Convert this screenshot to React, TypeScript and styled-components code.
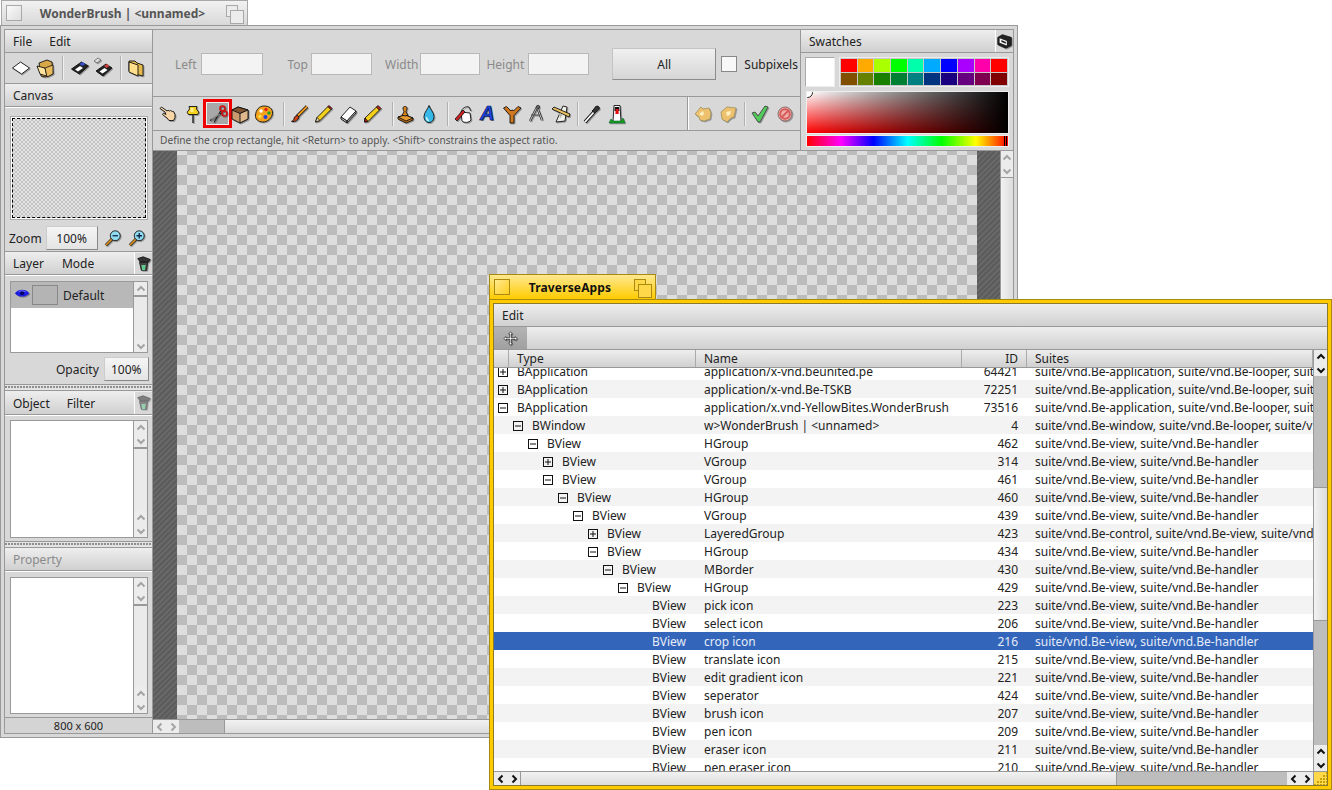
import React from "react";
import styled, { createGlobalStyle } from "styled-components";

const Global = createGlobalStyle`
  html, body { margin: 0; padding: 0; background: #fff; overflow: hidden; }
  body { font: 12px "Noto Sans", "DejaVu Sans", sans-serif; color: #222; }
  * { box-sizing: border-box; }
`;

const barGradient = "linear-gradient(#eeeeee, #d0d0d0)";

/* ---------- windows ---------- */
const Desk = styled.div`
  position: relative;
  width: 1332px;
  height: 790px;
  overflow: hidden;
`;
const Win = styled.section<{ $x: number; $y: number; $w: number; $h: number }>`
  position: absolute;
  left: ${(p) => p.$x}px;
  top: ${(p) => p.$y}px;
  width: ${(p) => p.$w}px;
  height: ${(p) => p.$h}px;
  display: flex;
  flex-direction: column;
`;
const Tab = styled.header<{ $active?: boolean; $w: number; $h: number; $ml: number }>`
  width: ${(p) => p.$w}px;
  height: ${(p) => p.$h}px;
  margin-left: ${(p) => p.$ml}px;
  flex: none;
  display: flex;
  align-items: center;
  padding: 0 4px;
  border: 1px solid ${(p) => (p.$active ? "#a88a10" : "#a8a8a8")};
  border-bottom: none;
  background: ${(p) => (p.$active ? "linear-gradient(#ffe890, #ffcb00)" : "linear-gradient(#f2f2f2, #d8d8d8)")};
`;
const TabBox = styled.span<{ $active?: boolean }>`
  width: 16px;
  height: 16px;
  flex: none;
  border: 1px solid ${(p) => (p.$active ? "#a88a10" : "#a8a8a8")};
  background: ${(p) => (p.$active ? "linear-gradient(135deg, #ffe890, #ffd020)" : "linear-gradient(135deg, #fafafa, #dedede)")};
`;
const TabZoom = styled.span<{ $active?: boolean }>`
  position: relative;
  width: 17px;
  height: 17px;
  flex: none;
  &::before, &::after {
    content: "";
    position: absolute;
    border: 1px solid ${(p) => (p.$active ? "#a88a10" : "#a8a8a8")};
    background: ${(p) => (p.$active ? "#ffd84a" : "#ececec")};
  }
  &::before { left: 0; top: 0; width: 10px; height: 10px; }
  &::after { left: 4px; top: 5px; width: 12px; height: 12px; }
`;
const TabTitle = styled.h1<{ $active?: boolean }>`
  flex: 1;
  margin: 0 ${(p) => (p.$active ? 4 : 3)}px 0 0;
  text-align: center;
  font: bold 12px "Noto Sans", sans-serif;
  letter-spacing: ${(p) => (p.$active ? 0.15 : 0)}px;
  color: ${(p) => (p.$active ? "#111" : "#555")};
`;
const Frame = styled.div<{ $active?: boolean }>`
  flex: 1;
  min-height: 0;
  padding: 3px;
  border: 1px solid ${(p) => (p.$active ? "#a88a10" : "#999")};
  background: ${(p) => (p.$active ? "#ffcb00" : "#d8d8d8")};
  display: flex;
`;
const Inner = styled.div<{ $active?: boolean; $column?: boolean }>`
  flex: 1;
  min-width: 0;
  border: 1px solid ${(p) => (p.$active ? "#8a7a30" : "#999")};
  background: #d8d8d8;
  display: flex;
  flex-direction: ${(p) => (p.$column ? "column" : "row")};
  overflow: hidden;
`;

/* ---------- bars ---------- */
const Bar = styled.div<{ $h: number; $muted?: boolean; $low?: boolean }>`
  height: ${(p) => p.$h}px;
  flex: none;
  display: flex;
  align-items: center;
  padding-top: ${(p) => (p.$low ? 1 : 0)}px;
  background: ${barGradient};
  border-bottom: 1px solid #999;
  color: ${(p) => (p.$muted ? "#8a8a8a" : "#222")};
  white-space: nowrap;
`;
const BarItem = styled.span<{ $ml: number }>`
  margin-left: ${(p) => p.$ml}px;
`;
const BarButton = styled.span`
  margin-left: auto;
  width: 18px;
  align-self: stretch;
  display: flex;
  align-items: center;
  justify-content: center;
  border-left: 1px solid #fff;
  background: #d8d8d8;
`;

const LeftCol = styled.aside`
  width: 148px;
  flex: none;
  display: flex;
  flex-direction: column;
  border-right: 1px solid #999;
`;
const RightCol = styled.main`
  flex: 1;
  min-width: 0;
  display: flex;
  flex-direction: column;
`;
const ToolRow = styled.div`
  height: 31px;
  flex: none;
  display: flex;
  align-items: center;
  padding-left: 4px;
  background: #d8d8d8;
  border-bottom: 1px solid #999;
`;
const Cell = styled.span<{ $w?: number; $ml?: number }>`
  width: ${(p) => p.$w ?? 24}px;
  height: 24px;
  margin-left: ${(p) => p.$ml ?? 0}px;
  flex: none;
  display: flex;
  align-items: center;
  justify-content: center;
`;
const Sep = styled.span<{ $ml: number; $mr: number }>`
  width: 1px;
  height: 24px;
  flex: none;
  margin: 0 ${(p) => p.$mr}px 0 ${(p) => p.$ml}px;
  background: #b0b0b0;
  box-shadow: 1px 0 0 #f0f0f0;
`;
const Panel = styled.div<{ $h: number; $pt: number; $pb: number }>`
  height: ${(p) => p.$h}px;
  flex: none;
  display: flex;
  flex-direction: column;
  padding: ${(p) => p.$pt}px 4px ${(p) => p.$pb}px 5px;
  border-bottom: 1px solid #999;
  border-top: 1px solid #fff;
`;
const Preview = styled.div`
  height: 104px;
  margin-bottom: 4px;
  flex: none;
  border: 1px solid #aaa;
  padding: 1px;
  background: #fff;
  display: flex;
`;
const PreviewInner = styled.div`
  flex: 1;
  border: 1px dashed #000;
  background: repeating-conic-gradient(#c4c4c4 0 25%, #e2e2e2 0 50%) 0 0 / 4px 4px;
`;
const Row = styled.div<{ $h: number }>`
  height: ${(p) => p.$h}px;
  flex: none;
  display: flex;
  align-items: center;
`;
const ValueBox = styled.span<{ $w: number; $ml: number }>`
  width: ${(p) => p.$w}px;
  height: 24px;
  margin-left: ${(p) => p.$ml}px;
  flex: none;
  display: flex;
  align-items: center;
  justify-content: center;
  border: 1px solid #888;
  border-top-color: #ccc;
  border-left-color: #ccc;
  background: linear-gradient(#f5f5f5, #e4e4e4);
`;
const RowLabel = styled.span<{ $ml?: number }>`
  margin-left: ${(p) => p.$ml ?? 0}px;
`;
const ListBox = styled.div<{ $h?: number }>`
  ${(p) => (p.$h ? `height: ${p.$h}px; flex: none;` : "flex: 1;")}
  display: flex;
  min-height: 0;
  border: 1px solid #999;
  background: #fff;
`;
const ListBody = styled.div`
  flex: 1;
  min-width: 0;
`;
const LayerRow = styled.div`
  height: 26px;
  display: flex;
  align-items: center;
  background: #b8b8b8;
  padding-left: 3px;
`;
const LayerThumb = styled.span`
  width: 26px;
  height: 20px;
  margin: 0 5px 0 0;
  border: 1px solid #888;
  background: #b4b4b4;
`;
const Splitter = styled.div`
  height: 6px;
  flex: none;
  border-bottom: 1px solid #999;
  background: radial-gradient(circle at 1px 2px, #888 0.7px, transparent 0.8px) 0 0 / 3px 5px #e4e4e4;
`;
const StatusCount = styled.div`
  flex: 1;
  display: flex;
  align-items: center;
  justify-content: center;
  font-size: 11px;
  background: #d4d4d4;
`;

/* ---------- scrollbars ---------- */
const VScroll = styled.div<{ $dark?: boolean; $w?: number }>`
  width: ${(p) => p.$w ?? 14}px;
  flex: none;
  display: flex;
  flex-direction: column;
  border-left: 1px solid #999;
  background: ${(p) => (p.$dark ? "#bdbdbd" : "#eaeaea")};
`;
const HScroll = styled.div`
  height: 14px;
  flex: none;
  display: flex;
  border-top: 1px solid #999;
  background: #bdbdbd;
`;
const Arrow = styled.span<{ $h?: number; $w?: number }>`
  width: ${(p) => (p.$w ? `${p.$w}px` : "auto")};
  height: ${(p) => (p.$h ? `${p.$h}px` : "auto")};
  flex: none;
  display: flex;
  align-items: center;
  justify-content: center;
  background: #ececec;
`;
const VThumb = styled.span<{ $size: number; $before?: number }>`
  height: ${(p) => p.$size}px;
  margin-top: ${(p) => p.$before ?? 0}px;
  flex: none;
  border-top: 1px solid #999;
  border-bottom: 1px solid #999;
  background: linear-gradient(90deg, #f2f2f2, #dcdcdc);
`;
const Track = styled.span`
  flex: 1;
`;
const HThumb = styled.span<{ $ml: number; $w?: number }>`
  margin-left: ${(p) => p.$ml}px;
  ${(p) => (p.$w ? `width: ${p.$w}px; flex: none;` : "flex: 1;")}
  border-left: 1px solid #999;
  border-right: 1px solid #999;
  background: linear-gradient(#f2f2f2, #dcdcdc);
`;
const Chev = ({ d, dark }: { d: "u" | "d" | "l" | "r"; dark?: boolean }) => {
  const paths = { u: "M1.5 6.5L5 3l3.5 3.5", d: "M1.5 3.5L5 7l3.5-3.5", l: "M6.5 1.5L3 5l3.5 3.5", r: "M3.5 1.5L7 5 3.5 8.5" };
  return (
    <svg width="10" height="10" viewBox="0 0 10 10">
      <path d={paths[d]} fill="none" stroke={dark ? "#111" : "#a4a4a4"} strokeWidth="2" />
    </svg>
  );
};
const SideBar = ({ double }: { double?: boolean }) => (
  <VScroll>
    <Arrow $h={13}><Chev d="u" /></Arrow>
    {double && <Arrow $h={13}><Chev d="d" /></Arrow>}
    <VThumb $size={0} />
    <Track />
    {double && <Arrow $h={13}><Chev d="u" /></Arrow>}
    <Arrow $h={13}><Chev d="d" /></Arrow>
  </VScroll>
);

/* ---------- top panel ---------- */
const TopArea = styled.div`
  height: 121px;
  flex: none;
  display: flex;
  border-bottom: 1px solid #999;
`;
const TopMain = styled.div`
  flex: 1;
  min-width: 0;
  display: flex;
  flex-direction: column;
  border-right: 1px solid #999;
`;
const FieldRow = styled.div`
  height: 67px;
  flex: none;
  display: flex;
  align-items: center;
  padding: 2px 0 0 22px;
  border-bottom: 1px solid #999;
`;
const Field = styled.label<{ $ml?: number }>`
  display: flex;
  align-items: center;
  margin-left: ${(p) => p.$ml ?? 0}px;
  color: #8a8a8a;
`;
const FieldInput = styled.span<{ $w: number; $ml: number }>`
  width: ${(p) => p.$w}px;
  height: 22px;
  margin-left: ${(p) => p.$ml}px;
  border: 1px solid #b8b8b8;
  background: #f3f3f3;
`;
const AllButton = styled.span`
  width: 104px;
  height: 32px;
  margin-left: 23px;
  display: flex;
  align-items: center;
  justify-content: center;
  border: 1px solid #8c8c8c;
  border-top-color: #c4c4c4;
  border-left-color: #c4c4c4;
  background: linear-gradient(#f0f0f0, #d6d6d6);
`;
const CheckBox = styled.span`
  width: 16px;
  height: 16px;
  margin-left: 5px;
  flex: none;
  border: 1px solid #888;
  background: #f8f8f8;
`;
const CheckLabel = styled.span`
  margin-left: 7px;
`;
const IconRow = styled.div`
  height: 34px;
  flex: none;
  display: flex;
  align-items: center;
  padding-left: 3px;
  border-bottom: 1px solid #999;
`;
const ToolCell = styled.span`
  width: 24.5px;
  height: 26px;
  flex: none;
  display: flex;
  align-items: center;
  justify-content: center;
`;
const ActiveTool = styled.span`
  width: 29px;
  height: 29px;
  flex: none;
  margin: 0 -4.5px 0 -2px;
  display: flex;
  align-items: center;
  justify-content: center;
  border: 3px solid #f00000;
  outline: 1px solid #eee;
  outline-offset: -4px;
  background: #a8a8a8;
`;
const GroupDivider = styled.span<{ $ml: number; $mr: number }>`
  width: 2px;
  align-self: stretch;
  flex: none;
  margin: 0 ${(p) => p.$mr}px 0 ${(p) => p.$ml}px;
  background: linear-gradient(90deg, #999 50%, #fff 50%);
`;
const Hint = styled.div`
  flex: 1;
  display: flex;
  align-items: center;
  padding: 0 0 2px 7px;
  font-size: 10.2px;
  color: #555;
  white-space: nowrap;
`;
const SwatchCol = styled.div`
  width: 212px;
  flex: none;
  display: flex;
  flex-direction: column;
`;
const SwatchBody = styled.div`
  flex: 1;
  display: flex;
  flex-direction: column;
  padding: 4px 4px 0 4px;
  gap: 4px;
`;
const SwatchTop = styled.div`
  display: flex;
  gap: 4px;
  height: 30px;
`;
const Current = styled.span`
  width: 30px;
  flex: none;
  border: 1px solid #aaa;
  border-right-color: #eee;
  border-bottom-color: #eee;
  background: #fff;
`;
const SwatchGrid = styled.div`
  flex: 1;
  display: grid;
  grid-template-columns: repeat(10, 1fr);
  grid-template-rows: 1fr 1fr;
  gap: 1px;
  padding: 1px;
  background: #c8c8c8;
  border: 1px solid #eee;
`;
const Swatch = styled.span<{ $c: string }>`
  background: ${(p) => p.$c};
`;
const GradientBox = styled.div`
  height: 43px;
  flex: none;
  margin-left: 1px;
  border: 1px solid #eee;
  position: relative;
  overflow: hidden;
  background: linear-gradient(to right, transparent, #000), linear-gradient(to bottom, #fff, #f00);
`;
const GradientKnob = styled.span`
  position: absolute;
  left: -5px;
  top: -5px;
  width: 11px;
  height: 11px;
  border-radius: 50%;
  border: 1px solid #222;
  background: #fff;
`;
const HueStrip = styled.div`
  height: 12px;
  flex: none;
  margin: -3px 0 0 1px;
  position: relative;
  border: 1px solid #eee;
  background: linear-gradient(to right, #f00 0%, #f0f 17%, #00f 33%, #0ff 50%, #0f0 67%, #ff0 84%, #f00 100%);
`;
const HueMarker = styled.span`
  position: absolute;
  right: 1px;
  top: 0;
  bottom: 0;
  width: 3px;
  background: #f00;
  border-left: 1px solid #000;
  border-right: 1px solid #000;
`;

/* ---------- canvas ---------- */
const Workspace = styled.div`
  flex: 1;
  min-height: 0;
  display: flex;
`;
const Stripes = styled.div`
  width: 24px;
  flex: none;
  background: repeating-linear-gradient(-45deg, #5c5c5c 0 2px, #686868 2px 4px);
`;
const Checker = styled.div`
  width: 800px;
  flex: none;
  background: repeating-conic-gradient(#dedede 0 25%, #bcbcbc 0 50%) 0 4px / 20px 20px;
`;
const RightStripes = styled(Stripes)`
  width: 23px;
`;

/* ---------- traverse list ---------- */
const ListArea = styled.div`
  flex: 1;
  min-height: 0;
  display: flex;
`;
const TreeColumn = styled.div`
  flex: 1;
  min-width: 0;
  display: flex;
  flex-direction: column;
`;
const HeaderRow = styled.div`
  height: 18px;
  flex: none;
  display: grid;
  grid-template-columns: 15px 187px 266px 65px 1fr;
  background: ${barGradient};
  border-bottom: 1px solid #999;
  position: relative;
  z-index: 1;
`;
const HeaderCell = styled.span<{ $right?: boolean }>`
  padding: 0 ${(p) => (p.$right ? "8px" : "0")} 0 ${(p) => (p.$right ? "0" : "8px")};
  text-align: ${(p) => (p.$right ? "right" : "left")};
  border-right: 1px solid #aaa;
  line-height: 18px;
  overflow: hidden;
`;
const Rows = styled.div`
  flex: 1;
  min-height: 0;
  overflow: hidden;
  background: #fff;
`;
const RowsInner = styled.div`
  margin-top: -6px;
`;
const TreeRow = styled.div<{ $sel?: boolean; $alt?: boolean }>`
  height: 18px;
  display: grid;
  grid-template-columns: 201px 266px 65px 1fr;
  align-items: center;
  white-space: nowrap;
  background: ${(p) => (p.$sel ? "#3366bb" : p.$alt ? "#f3f3f3" : "#fff")};
  color: ${(p) => (p.$sel ? "#e6ecf8" : "#222")};
`;
const TypeCell = styled.span<{ $depth: number }>`
  position: relative;
  padding-left: ${(p) => 23 + p.$depth * 15}px;
`;
const Expander = styled.svg<{ $depth: number }>`
  position: absolute;
  left: ${(p) => 4 + p.$depth * 15}px;
  top: 4px;
  width: 10px;
  height: 10px;
`;
const NameCell = styled.span`
  padding-left: 9px;
`;
const IdCell = styled.span`
  padding-right: 8px;
  text-align: right;
`;
const SuiteCell = styled.span`
  padding-left: 9px;
  overflow: hidden;
`;
const MoveButton = styled.span`
  width: 33px;
  align-self: stretch;
  display: flex;
  align-items: center;
  justify-content: center;
  background: linear-gradient(#b4b4b4, #a0a0a0);
`;
const Corner = styled.span`
  width: 14px;
  flex: none;
  border-left: 1px solid #999;
  background:
    linear-gradient(135deg, #ffd84a 50%, transparent 50%),
    radial-gradient(circle at 1px 1px, #c8a200 0.8px, transparent 1px) 0 0 / 3px 3px #ffda55;
`;

/* ---------- icons ---------- */
const Svg = styled.svg<{ $dim?: boolean; $s?: number }>`
  width: ${(p) => p.$s ?? 20}px;
  height: ${(p) => p.$s ?? 20}px;
  flex: none;
  overflow: visible;
  opacity: ${(p) => (p.$dim ? 0.55 : 1)};
  filter: drop-shadow(1px 1px 0 rgba(0, 0, 0, 0.3));
`;
const k = { stroke: "#111", strokeWidth: 0.9, strokeLinejoin: "round" as const };
const icons: Record<string, React.ReactNode> = {
  hand: <path {...k} fill="#f8d6a6" d="M2 4.5l1.500-1.500 5.500 4 1-.8 1.500.8 1.200-.5 1.500 1 1.300 0 1.500 3v3l-1.500 3H11l-2-2.500-4.500-3.500 1-1.400 2.500 1.400-1-2.500z" />,
  pin: <><path d="M10 10v9" stroke="#333" strokeWidth="1.600" /><path {...k} fill="#f6d21f" d="M6 2.500h8l-.6 2.400 2.400 3.300-1.200 2.300H5.400L4.200 8.200l2.400-3.300z" /><path d="M7.500 4h3v4h-3z" fill="#fff08a" /></>,
  crop: <><path d="M2 16.500L14.500 8.500M6 18.500L13 6.500" stroke="#222" strokeWidth="1.300" /><path d="M3.500 15.500L12 10" stroke="#eee" strokeWidth=".6" /><circle cx="14.500" cy="4.500" r="2.500" fill="none" stroke="#d01010" strokeWidth="1.600" /><circle cx="16.500" cy="9.500" r="2.500" fill="none" stroke="#d01010" strokeWidth="1.600" /></>,
  box: <><path {...k} fill="#c99a6e" d="M2 6l6-3 10 3v9l-8 4-8-4z" /><path {...k} fill="#7d5430" d="M2 6l8 3.500L18 6 8 3z" /><path {...k} fill="#e0b68c" d="M10 9.500V19l8-4V6z" /></>,
  palette: <><path {...k} fill="#f2a21c" d="M10 2c5 0 9 2.500 8.500 7.500-.4 4-4.500 8.500-9.500 8.500S1 15 1.500 11C2 6 5 2 10 2z" /><circle cx="7" cy="7" r="1.700" fill="#fff" /><circle cx="12" cy="5.500" r="1.700" fill="#e02020" /><circle cx="15" cy="9" r="1.700" fill="#20a020" /><circle cx="11.500" cy="13" r="2" fill="#2040e0" /><circle cx="6" cy="12.500" r="1.700" fill="#f8e040" /></>,
  brush: <><path d="M18 2.500L8.500 12" stroke="#111" strokeWidth="3.400" /><path d="M18 2.500L8.500 12" stroke="#f09a20" strokeWidth="1.800" /><path {...k} fill="#c83c10" d="M8 11l2 2c-.5 3-3.500 5-7.500 4.500 2-1 2.500-2.500 3-4.500z" /></>,
  pen: <><path {...k} fill="#f4d018" d="M15 2.500l3 3L7 16.500l-4.500 1.500L4 13.500z" /><path {...k} fill="#d82020" d="M15 2.500l1-1 3 3-1 1z" /><path d="M2.500 18L4 13.500l3 3z" fill="#f4dcb0" stroke="#111" strokeWidth=".8" /></>,
  eraser: <><path {...k} fill="#fff" d="M12 3l6 4-9 10-6-4z" /><path {...k} fill="#ccc" d="M3 13l6 4v2l-6-4zM9 17l9-10v2L9 19z" /></>,
  peneraser: <><path {...k} fill="#f4d018" d="M14.500 3l3 3L6 17.500 2.500 18 3 14z" /><path {...k} fill="#d82020" d="M14.500 3l1.500-1.500 3 3L17.500 6zM3 14l3 3.500-3.500.5z" /></>,
  stamp: <><path {...k} fill="#c87414" d="M3 13l7-2 8 3v2l-7 3-8-4z" /><path {...k} fill="#e89a30" d="M3 13l7-2 8 3-7 3z" /><path {...k} fill="#d8841c" d="M8 4c0-2 4-2 4 0s-1 3-1 4l2 3-3 1-3-1 2-3c0-1-1-2-1-4z" /></>,
  drop: <><path {...k} fill="#38b8e8" d="M10 1.500c1 3.500 5 7 5 11s-2.500 6-5 6-5-2-5-6 4-7.500 5-11z" /><path d="M7.500 13c0 2 1 3.500 2.500 3.500" stroke="#c8f2ff" strokeWidth="1.500" fill="none" /></>,
  bucket: <><path {...k} fill="#fff" d="M8 8l9 1 1 7c-2 3-7 3-9 1z" /><path {...k} fill="none" d="M8 8c1-4 5-6 8-5l2 4" /><path d="M2 15L10 6l2 2-8 9z" fill="#d02020" stroke="#111" strokeWidth=".8" /></>,
  branch: <path {...k} fill="#d07820" d="M1.500 4l3-1.500L9 7l.5-.8 1.500 0 .5.800 4.500-4.500 3 1.500L12 11.500V19H8v-7.500z" />,
  compass: <><path d="M11 3L4 17M11 3l5 13" stroke="#222" strokeWidth="2.200" fill="none" /><path d="M11 3L4 17M11 3l5 13" stroke="#ddd" strokeWidth=".9" fill="none" /><path d="M5 11h9" stroke="#555" strokeWidth="1.200" /><circle cx="12" cy="3" r="1.700" fill="#666" stroke="#111" strokeWidth=".6" /></>,
  ruler: <><path {...k} fill="#f0f0e8" d="M12 2l4 1-2 14-9 1z" /><path {...k} fill="#e8c060" d="M1 5l2-2 16 7-1 3z" /><path d="M8 9l4 1.500-3 4z" fill="#b9b9b0" /></>,
  dropper: <><path d="M3 18L12 8" stroke="#111" strokeWidth="3.400" /><path d="M3 18L12 8" stroke="#fff" strokeWidth="1.800" /><path {...k} fill="#333" d="M10 7l2-2c1-2.500 3-3.500 4.500-2.500s1 3.500-1.500 4.500l-2 2z" /></>,
  post: <><path d="M7 1.500h6l1 16H6z" fill="#fff" stroke="#111" strokeWidth=".9" /><path d="M7.800 3h4.200l.4 4H7.500z" fill="#111" /><path d="M8.500 5h3l.2 5H8.400z" fill="#e01010" /><path d="M2 19l2-4 2 2 8 0 2-3 2 5z" fill="#18a018" stroke="#063" strokeWidth=".6" /></>,
  prev: <><path fill="#edc16e" stroke="#a0905c" strokeWidth=".8" d="M2 10l6-7 2 2 6-1 2 5-1 6-6 2-4-1-1-3z" /><path d="M6 10l4-3 1 3-2 2z" fill="#fff0c0" /></>,
  next: <><path fill="#edc16e" stroke="#a0905c" strokeWidth=".8" d="M18 4l-9-1-6 5 1 7 5 3 4-4 3-1z" /><path d="M8 8l5-1-1 4-3 1z" fill="#fff0c0" /></>,
  check: <path fill="#52cc5a" stroke="#444" strokeWidth=".9" strokeLinejoin="round" d="M2 9l3-1 3 4 7-10 3 1-8 15H8z" />,
  no: <><circle cx="10" cy="10" r="7" fill="#eeb0a8" stroke="#8a6a6a" strokeWidth="1" /><circle cx="10" cy="10" r="4.800" fill="none" stroke="#d65c5c" strokeWidth="2" /><path d="M6 14l8-8" stroke="#d65c5c" strokeWidth="2" /></>,
  newdoc: <path {...k} fill="#fff" d="M1.500 10l8-6 9 6-8 6z" />,
  open: <><path {...k} fill="#d8a848" d="M4 5l8-3 5 2 1 12-8 3-4-1z" /><path {...k} fill="#ffe6a0" d="M2 8l8 2 2 8-7-2z" /><path d="M10 10l8-3v9l-6 3z" fill="#e8bc5c" stroke="#111" strokeWidth=".8" /></>,
  disk: <><path {...k} fill="#222" d="M1.500 11l10-7 7 4-9 8z" /><path d="M5 11.500l5-3.500 3 2-5 3.500z" fill="#fff" /><path d="M9.500 6l3-2 3 2-3 2z" fill="#3a50d0" /></>,
  diskplus: <><path fill="#ddd" stroke="#555" strokeWidth=".7" d="M1 3l4-3 3 2-4 3z" /><path {...k} fill="#222" d="M3 13l10-7 6 4-9 8z" /><path d="M6.500 13.500l5-3.500 3 2-5 3.500z" fill="#fff" /><path d="M11 8l3-2 2.500 2-3 2z" fill="#d04040" /></>,
  folder: <><path {...k} fill="#e4b94e" d="M3 3h6l2 2 6 2v11l-8-2-6-3z" /><path {...k} fill="#ffe08a" d="M3 4l9 3v11l-9-4z" /></>,
  zoomout: <><path d="M2 18L9 11" stroke="#111" strokeWidth="3.200" /><path d="M2 18L9 11" stroke="#ee9a20" strokeWidth="1.700" /><circle cx="12.500" cy="7.500" r="5.500" fill="#8fdcf0" stroke="#111" strokeWidth="1" /><path d="M9.500 7.500h6" stroke="#124" strokeWidth="1.400" /></>,
  zoomin: <><path d="M2 18L9 11" stroke="#111" strokeWidth="3.200" /><path d="M2 18L9 11" stroke="#ee9a20" strokeWidth="1.700" /><circle cx="12.500" cy="7.500" r="5.500" fill="#8fdcf0" stroke="#111" strokeWidth="1" /><path d="M9.500 7.500h6M12.500 4.500v6" stroke="#124" strokeWidth="1.400" /></>,
  trash: <><path {...k} fill="#333" d="M3 4l6-2 8 3-2 3-9 0z" /><path {...k} fill="#444" d="M5 8l9 0-1 9H7z" /><path d="M7 11h5l-1 6H8z" fill="#5ec88c" /></>,
  stack: <><path {...k} fill="#222" d="M2 6l5-3 10 3v9l-6 3-9-4z" /><path d="M4 7l8 3v5l-8-3z" fill="#fff" /><path d="M6 9l5 2v2l-5-2z" fill="#222" /></>,
  eye: <><path d="M1 8c4-5 12-5 16 0-4 5-12 5-16 0z" fill="#1a1ae0" /><circle cx="9" cy="8" r="2.200" fill="#000060" /><path d="M5 6.500c2-1.500 6-1.500 8 0" stroke="#9090ff" fill="none" strokeWidth=".8" /></>,
  move: <><path d="M10 1l2.500 3H11v5h5V7.500l3 2.500-3 2.500V11h-5v5h1.500L10 19l-2.500-3H9v-5H4v1.500L1 10l3-2.500V9h5V4H7.500z" fill="#fff" stroke="#111" strokeWidth=".8" /></>,
};
const Icon = ({ n, dim, s }: { n: string; dim?: boolean; s?: number }) => (
  <Svg viewBox="0 0 20 20" $dim={dim} $s={s}>{icons[n]}</Svg>
);
const TextTool = styled.span`
  font: italic bold 20px "Liberation Sans", sans-serif;
  color: #2048e0;
  -webkit-text-stroke: 0.7px #001060;
  text-shadow: 1px 1px 0 rgba(0, 0, 0, 0.5);
`;

/* ---------- data ---------- */
const appSuite = "suite/vnd.Be-application, suite/vnd.Be-looper, suite/vnd.Be-handler";
const viewSuite = "suite/vnd.Be-view, suite/vnd.Be-handler";
type R = { t: string; n: string; id: number; s: string; d: number; e?: "+" | "-" };
const data: R[] = [
  { t: "BApplication", n: "application/x-vnd.beunited.pe", id: 64421, s: appSuite, d: 0, e: "+" },
  { t: "BApplication", n: "application/x-vnd.Be-TSKB", id: 72251, s: appSuite, d: 0, e: "+" },
  { t: "BApplication", n: "application/x.vnd-YellowBites.WonderBrush", id: 73516, s: appSuite, d: 0, e: "-" },
  { t: "BWindow", n: "w>WonderBrush | <unnamed>", id: 4, s: "suite/vnd.Be-window, suite/vnd.Be-looper, suite/vnd.Be-handler", d: 1, e: "-" },
  { t: "BView", n: "HGroup", id: 462, s: viewSuite, d: 2, e: "-" },
  { t: "BView", n: "VGroup", id: 314, s: viewSuite, d: 3, e: "+" },
  { t: "BView", n: "VGroup", id: 461, s: viewSuite, d: 3, e: "-" },
  { t: "BView", n: "HGroup", id: 460, s: viewSuite, d: 4, e: "-" },
  { t: "BView", n: "VGroup", id: 439, s: viewSuite, d: 5, e: "-" },
  { t: "BView", n: "LayeredGroup", id: 423, s: "suite/vnd.Be-control, suite/vnd.Be-view, suite/vnd.Be-handler", d: 6, e: "+" },
  { t: "BView", n: "HGroup", id: 434, s: viewSuite, d: 6, e: "-" },
  { t: "BView", n: "MBorder", id: 430, s: viewSuite, d: 7, e: "-" },
  { t: "BView", n: "HGroup", id: 429, s: viewSuite, d: 8, e: "-" },
  ...([
    ["pick icon", 223], ["select icon", 206], ["crop icon", 216], ["translate icon", 215],
    ["edit gradient icon", 221], ["seperator", 424], ["brush icon", 207], ["pen icon", 209],
    ["eraser icon", 211], ["pen eraser icon", 210],
  ] as [string, number][]).map(([n, id]) => ({ t: "BView", n, id, s: viewSuite, d: 9 })),
];
const swatches = [
  "#ff0000", "#ffaa00", "#aaff00", "#00ff00", "#00ffaa", "#00aaff", "#0000ff", "#aa00ff", "#ff00aa", "#ff0000",
  "#805000", "#668000", "#1a8000", "#008033", "#008080", "#003380", "#1a0080", "#660080", "#800050", "#800000",
];

export default function App() {
  return (
    <Desk>
      <Global />

      <Win $x={0} $y={0} $w={1018} $h={738}>
        <Tab $w={247} $h={25} $ml={1}>
          <TabBox />
          <TabTitle>WonderBrush | &lt;unnamed&gt;</TabTitle>
          <TabZoom />
        </Tab>
        <Frame>
          <Inner>
            <LeftCol>
              <Bar $h={23} $low><BarItem $ml={8}>File</BarItem><BarItem $ml={17}>Edit</BarItem></Bar>
              <ToolRow>
                <Cell><Icon n="newdoc" /></Cell>
                <Cell><Icon n="open" /></Cell>
                <Sep $ml={5} $mr={5} />
                <Cell $w={23}><Icon n="disk" /></Cell>
                <Cell $w={23}><Icon n="diskplus" /></Cell>
                <Sep $ml={6} $mr={3} />
                <Cell><Icon n="folder" /></Cell>
              </ToolRow>
              <Bar $h={23} $low><BarItem $ml={8}>Canvas</BarItem></Bar>
              <Panel $h={145} $pt={8} $pb={0}>
                <Preview><PreviewInner /></Preview>
                <Row $h={28}>
                  <RowLabel $ml={-1}>Zoom</RowLabel>
                  <ValueBox $w={52} $ml={4}>100%</ValueBox>
                  <Cell $ml={3}><Icon n="zoomout" s={18} /></Cell>
                  <Cell><Icon n="zoomin" s={18} /></Cell>
                </Row>
              </Panel>
              <Bar $h={23} $low>
                <BarItem $ml={8}>Layer</BarItem><BarItem $ml={18}>Mode</BarItem>
                <BarButton><Icon n="trash" s={18} /></BarButton>
              </Bar>
              <Panel $h={110} $pt={5} $pb={0}>
                <ListBox $h={72}>
                  <ListBody>
                    <LayerRow>
                      <Icon n="eye" s={18} />
                      <LayerThumb />
                      Default
                    </LayerRow>
                  </ListBody>
                  <SideBar />
                </ListBox>
                <Row $h={32}>
                  <RowLabel $ml={46}>Opacity</RowLabel>
                  <ValueBox $w={45} $ml={5}>100%</ValueBox>
                </Row>
              </Panel>
              <Splitter />
              <Bar $h={24} $low>
                <BarItem $ml={8}>Object</BarItem><BarItem $ml={17}>Filter</BarItem>
                <BarButton><Icon n="trash" s={18} dim /></BarButton>
              </Bar>
              <Panel $h={127} $pt={4} $pb={3}>
                <ListBox><ListBody /><SideBar double /></ListBox>
              </Panel>
              <Splitter />
              <Bar $h={23} $muted $low><BarItem $ml={8}>Property</BarItem></Bar>
              <Panel $h={147} $pt={5} $pb={3}>
                <ListBox><ListBody /><SideBar double /></ListBox>
              </Panel>
              <StatusCount>800 x 600</StatusCount>
            </LeftCol>

            <RightCol>
              <TopArea>
                <TopMain>
                  <FieldRow>
                    <Field>Left<FieldInput $w={62} $ml={4} /></Field>
                    <Field $ml={25}>Top<FieldInput $w={61} $ml={3} /></Field>
                    <Field $ml={13}>Width<FieldInput $w={60} $ml={2} /></Field>
                    <Field $ml={6}>Height<FieldInput $w={61} $ml={4} /></Field>
                    <AllButton>All</AllButton>
                    <CheckBox />
                    <CheckLabel>Subpixels</CheckLabel>
                  </FieldRow>
                  <IconRow>
                    <ToolCell><Icon n="hand" /></ToolCell>
                    <ToolCell><Icon n="pin" /></ToolCell>
                    <ActiveTool><Icon n="crop" /></ActiveTool>
                    <ToolCell><Icon n="box" /></ToolCell>
                    <ToolCell><Icon n="palette" /></ToolCell>
                    <Sep $ml={6} $mr={3} />
                    <ToolCell><Icon n="brush" /></ToolCell>
                    <ToolCell><Icon n="pen" /></ToolCell>
                    <ToolCell><Icon n="eraser" /></ToolCell>
                    <ToolCell><Icon n="peneraser" /></ToolCell>
                    <Sep $ml={7} $mr={0} />
                    <ToolCell><Icon n="stamp" /></ToolCell>
                    <ToolCell><Icon n="drop" /></ToolCell>
                    <Sep $ml={5} $mr={3} />
                    <ToolCell><Icon n="bucket" /></ToolCell>
                    <ToolCell><TextTool>A</TextTool></ToolCell>
                    <ToolCell><Icon n="branch" /></ToolCell>
                    <ToolCell><Icon n="compass" /></ToolCell>
                    <ToolCell><Icon n="ruler" /></ToolCell>
                    <Sep $ml={4} $mr={2} />
                    <ToolCell><Icon n="dropper" /></ToolCell>
                    <ToolCell><Icon n="post" /></ToolCell>
                    <GroupDivider $ml={58} $mr={2} />
                    <ToolCell><Icon n="prev" /></ToolCell>
                    <ToolCell><Icon n="next" /></ToolCell>
                    <Sep $ml={4} $mr={3} />
                    <ToolCell><Icon n="check" /></ToolCell>
                    <ToolCell><Icon n="no" /></ToolCell>
                  </IconRow>
                  <Hint>Define the crop rectangle, hit &lt;Return&gt; to apply. &lt;Shift&gt; constrains the aspect ratio.</Hint>
                </TopMain>
                <SwatchCol>
                  <Bar $h={23}>
                    <BarItem $ml={8}>Swatches</BarItem>
                    <BarButton><Icon n="stack" s={18} /></BarButton>
                  </Bar>
                  <SwatchBody>
                    <SwatchTop>
                      <Current />
                      <SwatchGrid>
                        {swatches.map((c, i) => <Swatch key={i} $c={c} />)}
                      </SwatchGrid>
                    </SwatchTop>
                    <GradientBox><GradientKnob /></GradientBox>
                    <HueStrip><HueMarker /></HueStrip>
                  </SwatchBody>
                </SwatchCol>
              </TopArea>
              <Workspace>
                <Stripes />
                <Checker />
                <RightStripes />
                <VScroll $w={13}>
                  <Arrow $h={13}><Chev d="u" /></Arrow>
                  <Arrow $h={13}><Chev d="d" /></Arrow>
                  <VThumb $size={560} />
                </VScroll>
              </Workspace>
              <HScroll>
                <Arrow $w={13}><Chev d="l" /></Arrow>
                <Arrow $w={13}><Chev d="r" /></Arrow>
                <HThumb $ml={45} />
              </HScroll>
            </RightCol>
          </Inner>
        </Frame>
      </Win>

      <Win $x={489} $y={274} $w={843} $h={516}>
        <Tab $active $w={167} $h={25} $ml={0}>
          <TabBox $active />
          <TabTitle $active>TraverseApps</TabTitle>
          <TabZoom $active />
        </Tab>
        <Frame $active>
          <Inner $active $column>
            <Bar $h={23}><BarItem $ml={8}>Edit</BarItem></Bar>
            <Bar $h={23}><MoveButton><Icon n="move" s={15} /></MoveButton></Bar>
            <ListArea>
              <TreeColumn>
                <HeaderRow>
                  <HeaderCell />
                  <HeaderCell>Type</HeaderCell>
                  <HeaderCell>Name</HeaderCell>
                  <HeaderCell $right>ID</HeaderCell>
                  <HeaderCell>Suites</HeaderCell>
                </HeaderRow>
                <Rows>
                  <RowsInner>
                    {data.map((r, i) => (
                      <TreeRow key={i} $alt={i % 2 === 1} $sel={r.id === 216}>
                        <TypeCell $depth={r.d}>
                          {r.e && (
                            <Expander $depth={r.d} viewBox="0 0 10 10">
                              <rect x=".5" y=".5" width="9" height="9" fill="none" stroke="#111" />
                              <path d={r.e === "+" ? "M2 5h6M5 2v6" : "M2 5h6"} stroke="#111" />
                            </Expander>
                          )}
                          {r.t}
                        </TypeCell>
                        <NameCell>{r.n}</NameCell>
                        <IdCell>{r.id}</IdCell>
                        <SuiteCell>{r.s}</SuiteCell>
                      </TreeRow>
                    ))}
                  </RowsInner>
                </Rows>
              </TreeColumn>
              <VScroll $dark $w={14}>
                <Arrow $h={13}><Chev d="u" dark /></Arrow>
                <Arrow $h={13}><Chev d="d" dark /></Arrow>
                <VThumb $before={111} $size={134} />
                <Track />
                <Arrow $h={13}><Chev d="u" dark /></Arrow>
                <Arrow $h={13}><Chev d="d" dark /></Arrow>
              </VScroll>
            </ListArea>
            <HScroll>
              <Arrow $w={13}><Chev d="l" dark /></Arrow>
              <Arrow $w={13}><Chev d="r" dark /></Arrow>
              <HThumb $ml={0} $w={597} />
              <Track />
              <Arrow $w={13}><Chev d="l" dark /></Arrow>
              <Arrow $w={13}><Chev d="r" dark /></Arrow>
              <Corner />
            </HScroll>
          </Inner>
        </Frame>
      </Win>
    </Desk>
  );
}
